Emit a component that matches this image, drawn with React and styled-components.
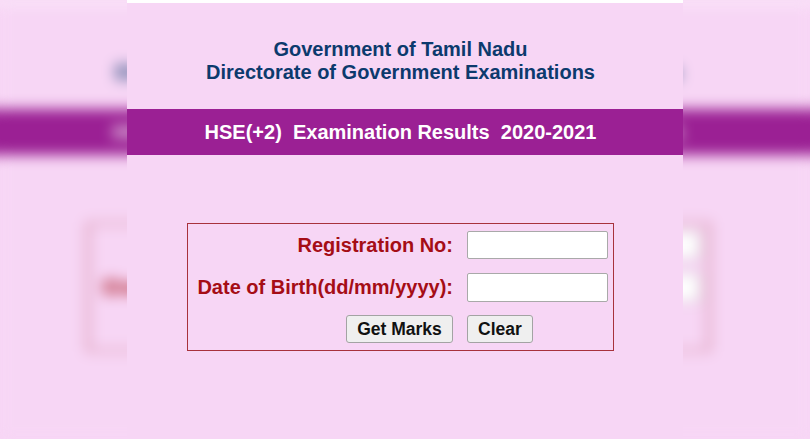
import React from 'react'
import styled, { createGlobalStyle } from 'styled-components'

const PAGE_W = 556
const VIEW_W = 810

const GlobalStyle = createGlobalStyle`
  html, body {
    margin: 0;
    padding: 0;
    overflow: hidden;
    background: #f7d6f5;
  }
`

const Screen = styled.div`
  position: relative;
  width: ${VIEW_W}px;
  height: 439px;
  overflow: hidden;
  background: #f7d6f5;
  font-family: "Liberation Sans", Arial, sans-serif;
`

// blurred, stretched copy of the page that fills the letterbox
const Backdrop = styled.div`
  position: absolute;
  inset: 0;
  filter: blur(7px);
  pointer-events: none;

  & > div {
    transform: scaleX(${VIEW_W / PAGE_W});
    transform-origin: left top;
    margin: 0;
  }
`

const Page = styled.div`
  position: relative;
  width: ${PAGE_W}px;
  height: 439px;
  margin: 0 auto;
  background: #f7d6f5;
  box-sizing: border-box;
  display: flex;
  flex-direction: column;
`

const TopEdge = styled.div`
  height: 3px;
  background: #ffffff;
  margin: ${(p) => (p.$wide ? '0 -40px' : '0')};
`

const Heading = styled.div`
  padding: 35px 9px 0 0;
  text-align: center;
  font-size: 20px;
  line-height: 23px;
  font-weight: bold;
  color: #0c3a6d;
`

const Banner = styled.div`
  margin: ${(p) => (p.$wide ? '25px -40px 0' : '25px 0 0')};
  height: 46px;
  background: #9b2094;
  color: #ffffff;
  display: flex;
  align-items: center;
  justify-content: center;
  padding-right: 9px;
  font-size: 20px;
  font-weight: bold;
  white-space: pre;
`

const FormArea = styled.div`
  display: flex;
  justify-content: center;
  padding-right: 9px;
  margin-top: 68px;
`

const FormBox = styled.form`
  width: 427px;
  box-sizing: border-box;
  border: 1px solid #a8323c;
  padding: 7px 7px 7px 8px;
  display: grid;
  grid-template-columns: 257px 141px;
  grid-auto-rows: 28px;
  column-gap: 14px;
  row-gap: 14px;
  margin: 0;
`

const Label = styled.label`
  display: flex;
  align-items: center;
  justify-content: flex-end;
  color: #a50d16;
  font-size: 20px;
  font-weight: bold;
  white-space: nowrap;
`

const Field = styled.input`
  width: 141px;
  height: ${(p) => p.$h || 28}px;
  box-sizing: border-box;
  border: 1px solid #a9a9a9;
  border-radius: 2px;
  background: #ffffff;
  margin: 0;
  padding: 0 4px;
  font-family: inherit;
  font-size: 16px;
`

const ButtonCell = styled.div`
  display: flex;
  justify-content: ${(p) => (p.$end ? 'flex-end' : 'flex-start')};
`

const Button = styled.button`
  width: ${(p) => p.$w}px;
  height: 28px;
  box-sizing: border-box;
  border: 1px solid #a3a3a3;
  border-radius: 3px;
  background: #efefef;
  color: #111111;
  font-family: inherit;
  font-size: 17.5px;
  font-weight: bold;
  padding: 0;
  cursor: pointer;
`

const ResultsPage = ({ backdrop }) => (
  <Page>
    <TopEdge $wide={backdrop} />
    <Heading>
      <div>Government of Tamil Nadu</div>
      <div>Directorate of Government Examinations</div>
    </Heading>
    <Banner $wide={backdrop}>{'HSE(+2)  Examination Results  2020-2021'}</Banner>
    <FormArea>
      <FormBox onSubmit={(e) => e.preventDefault()}>
        <Label htmlFor={backdrop ? undefined : 'regno'}>Registration No:</Label>
        <Field id={backdrop ? undefined : 'regno'} type="text" tabIndex={backdrop ? -1 : 0} />
        <Label htmlFor={backdrop ? undefined : 'dob'}>Date of Birth(dd/mm/yyyy):</Label>
        <Field id={backdrop ? undefined : 'dob'} type="text" $h={29} tabIndex={backdrop ? -1 : 0} />
        <ButtonCell $end>
          <Button type="submit" $w={107} tabIndex={backdrop ? -1 : 0}>Get Marks</Button>
        </ButtonCell>
        <ButtonCell>
          <Button type="reset" $w={66} tabIndex={backdrop ? -1 : 0}>Clear</Button>
        </ButtonCell>
      </FormBox>
    </FormArea>
  </Page>
)

export default function App() {
  return (
    <>
      <GlobalStyle />
      <Screen>
        <Backdrop aria-hidden="true">
          <ResultsPage backdrop />
        </Backdrop>
        <ResultsPage />
      </Screen>
    </>
  )
}
